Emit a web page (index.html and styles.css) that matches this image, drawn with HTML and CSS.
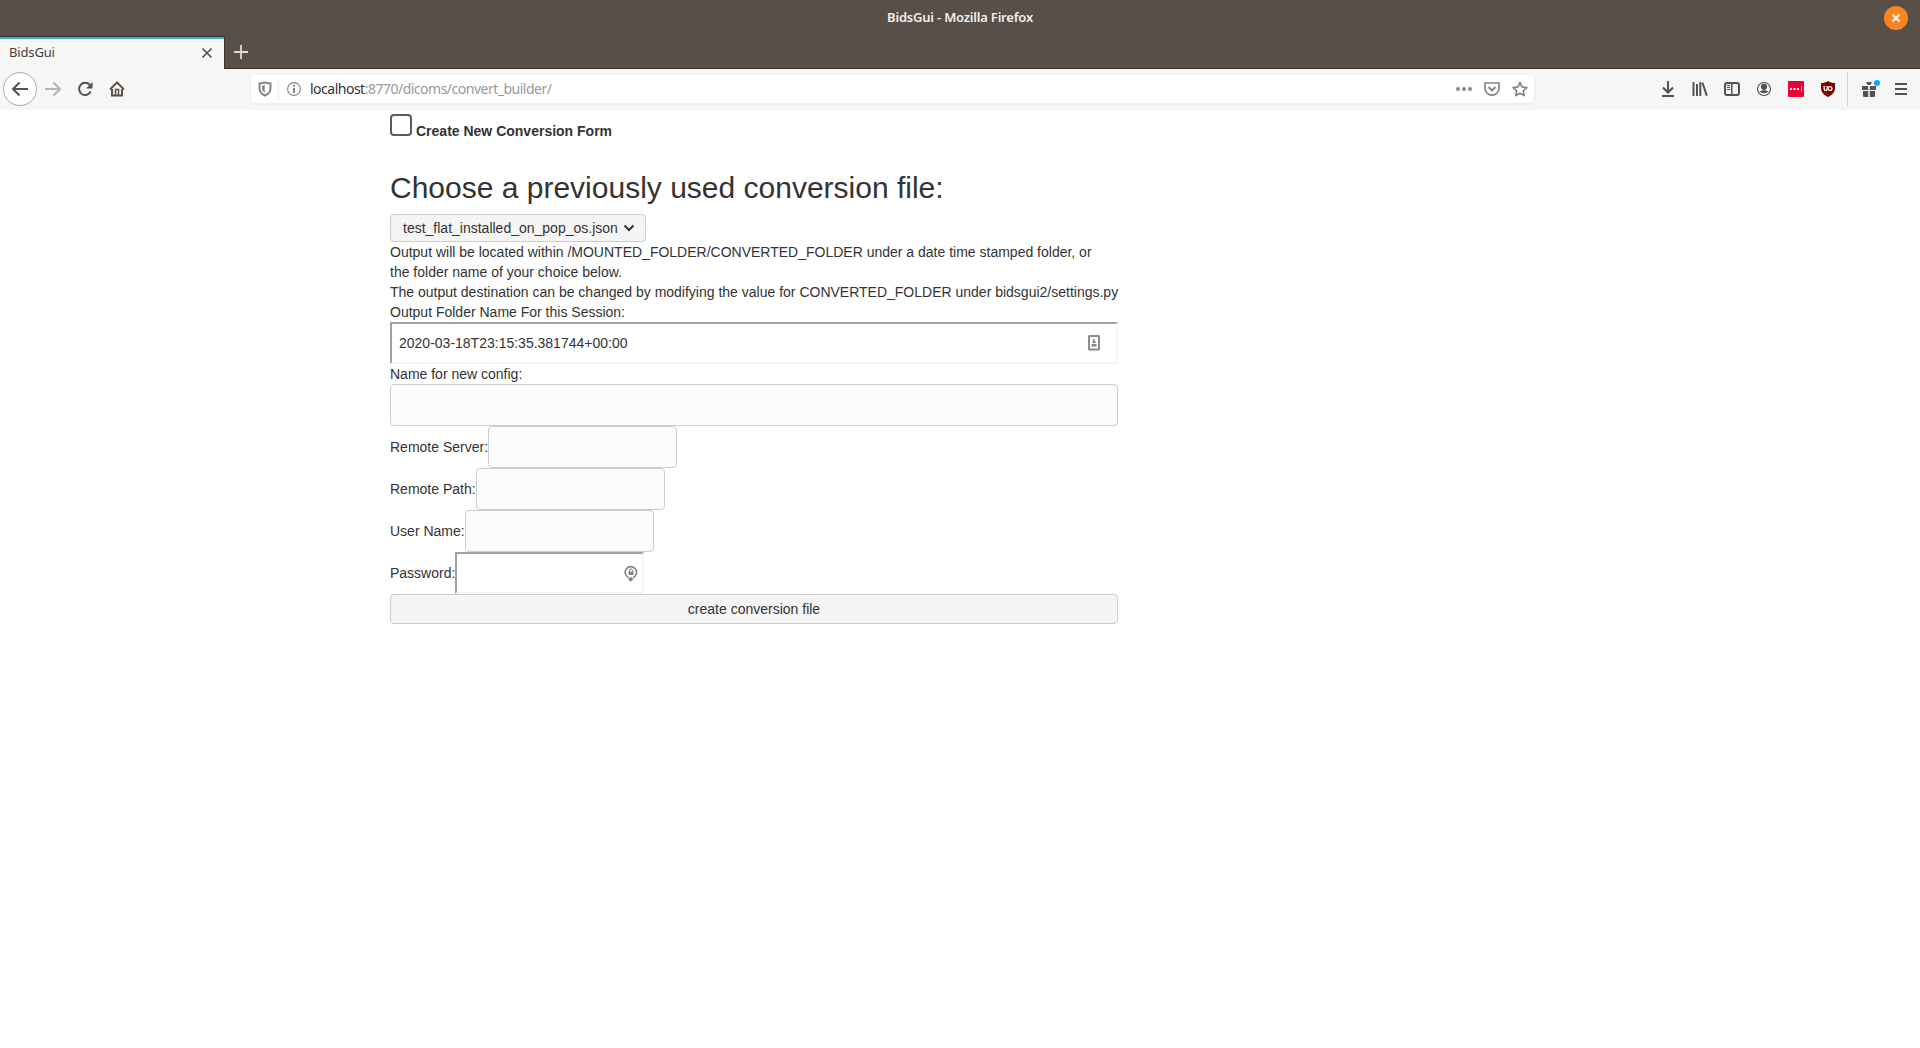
FILE: index.html
```html
<!DOCTYPE html>
<html lang="en">
<head>
<meta charset="utf-8">
<title>BidsGui</title>
<link rel="stylesheet" href="styles.css">
</head>
<body>
<header class="window-bar">
  <span></span>
  <span class="window-title">BidsGui - Mozilla Firefox</span>
  <svg class="window-close" width="24" height="24" viewBox="0 0 24 24"><circle cx="12" cy="12" r="12" fill="#f98420"/><path d="M8.600 8.600l6.800 6.800M15.400 8.600l-6.800 6.800" stroke="#f6eee7" stroke-width="2.200"/></svg>
</header>
<div class="tabs">
  <div class="tab"><span class="tab-title">BidsGui</span>
    <svg width="12" height="12" viewBox="0 0 12 12"><path d="M1.500 1.500l9 9M10.500 1.500l-9 9" stroke="#55504c" stroke-width="1.700"/></svg>
  </div>
  <div class="tab-add"><svg width="14" height="14" viewBox="0 0 14 14"><path d="M7 0v14M0 7h14" stroke="#dedbd9" stroke-width="1.800"/></svg></div>
</div>
<nav class="toolbar">
  <div class="nav-left">
    <span class="back"><svg width="18" height="16" viewBox="0 0 18 16"><path d="M17 8H2M8.500 1.500L2 8l6.500 6.500" class="line"/></svg></span>
    <span class="tool faded"><svg width="16" height="16" viewBox="0 0 16 16"><path d="M0 8h14M8.500 1.500L15 8l-6.500 6.500" class="line"/></svg></span>
    <span class="tool"><svg width="16" height="16" viewBox="0 0 16 16"><path d="M12.800 3.900A6.100 6.100 0 1 0 13.700 10.500" class="line"/><path d="M15.500 1v6.500H9z" fill="#57504b"/></svg></span>
    <span class="tool"><svg width="16" height="16" viewBox="0 0 16 16"><path d="M1 8.400L8 1.500l7 6.900" class="line"/><path d="M3 8v6.500h10V8" class="line"/><path d="M6.500 15V8.500h3V15" fill="none" stroke="#57504b" stroke-width="1.500"/></svg></span>
  </div>
  <div class="address">
    <span class="shield"><svg width="14" height="16" viewBox="0 0 14 16"><path d="M7 1.500C5 2 3 2.500 1.500 2.500V7c0 3.300 2 6 5.500 7.500 3.500-1.500 5.500-4.200 5.500-7.500V2.500C11 2.500 9 2 7 1.500z" fill="none" stroke="#858585" stroke-width="2"/><path d="M6.700 4L4 4.700V7c0 2 1 3.700 2.700 4.700z" fill="#858585"/></svg></span>
    <span class="info"><svg width="14" height="14" viewBox="0 0 14 14"><circle cx="7" cy="7" r="6.400" fill="none" stroke="#858585" stroke-width="1.100"/><circle cx="7" cy="3.900" r="1.100" fill="#858585"/><path d="M7 6v5" stroke="#858585" stroke-width="2"/></svg></span>
    <span class="url"><span class="host">localhost</span><span class="path">:8770/dicoms/convert_builder/</span></span>
    <span class="address-actions">
      <svg width="16" height="16" viewBox="0 0 16 16" fill="#858585"><circle cx="2" cy="8" r="2"/><circle cx="8" cy="8" r="2"/><circle cx="14" cy="8" r="2"/></svg>
      <svg width="16" height="16" viewBox="0 0 16 16" fill="none" stroke="#858585" stroke-width="1.700"><path d="M1 2h14v5.500a7 6.700 0 0 1-14 0z"/><path d="M4.500 6L8 9.400 11.500 6" stroke-width="2"/></svg>
      <svg width="16" height="16" viewBox="0 0 16 16"><path d="M8 1.500l2 4.400 4.900.6-3.600 3.300.9 4.800L8 12.200l-4.200 2.400.9-4.800L1.100 6.500 6 5.900z" fill="none" stroke="#858585" stroke-width="1.700" stroke-linejoin="round"/></svg>
    </span>
  </div>
  <div class="nav-right">
    <span class="tool"><svg width="14" height="16" viewBox="0 0 14 16"><path d="M7 0v11M2 6.500l5 5 5-5M1 15h12" class="line"/></svg></span>
    <span class="tool"><svg width="16" height="16" viewBox="0 0 16 16"><path d="M1.500 1v14M5 3v12M8.300 1v14M10.500 1.700l4.300 13" class="line"/></svg></span>
    <span class="tool"><svg width="16" height="16" viewBox="0 0 16 16"><rect x="1" y="2" width="14" height="12" rx="2" class="line"/><path d="M7.800 2v12" stroke="#57504b" stroke-width="1.500"/><path d="M3 4.500h3M3 6.500h3M3 8.500h3" stroke="#57504b"/></svg></span>
    <span class="tool"><svg width="16" height="16" viewBox="0 0 16 16"><circle cx="8" cy="8" r="6.500" fill="none" stroke="#57504b" stroke-width="1.100"/><circle cx="8" cy="5.800" r="3.100" fill="#57504b"/><path d="M3.500 10q2 .3 2.600-.8h3.800q.6 1.100 2.600.8a5 4 0 0 1-9 0z" fill="#57504b"/></svg></span>
    <span class="tool"><svg width="16" height="16" viewBox="0 0 16 16"><rect width="16" height="16" rx="1" fill="#ed0033"/><path d="M2 7h2v2H2zM5.500 7h2v2h-2zM9 7h2v2H9z" fill="#fff"/><path d="M13.500 5v6" stroke="#ff8da2"/></svg></span>
    <span class="tool"><svg width="16" height="16" viewBox="0 0 16 16"><path d="M8 0c2 1.500 4.500 2 7 2v5c0 4-2.500 7-7 9-4.500-2-7-5-7-9V2c2.500 0 5-.5 7-2z" fill="#800000"/><path d="M4.200 5v3a1.500 1.500 0 0 0 3 0V5" fill="none" stroke="#fff" stroke-width="1.300"/><circle cx="10" cy="7.500" r="1.900" fill="none" stroke="#fff" stroke-width="1.300"/></svg></span>
    <span class="divider"></span>
    <span class="tool gift"><svg width="20" height="18" viewBox="0 0 20 18"><path d="M1 7h6.200v4H1zM8.800 7H15v4H8.800zM2 12h5.200v6H3a1 1 0 0 1-1-1zM8.800 12H14v5a1 1 0 0 1-1 1H8.800z" fill="#57504b"/><path d="M5.500 3h5v1.500L9 6H7L5.500 4.500z" fill="#57504b"/><circle cx="16" cy="4" r="3" fill="#00adf2"/></svg></span>
    <span class="tool menu"><svg width="12" height="12" viewBox="0 0 12 12"><path d="M0 1h12M0 6h12M0 11h12" class="line"/></svg></span>
  </div>
</nav>
<main class="page">
  <form class="conversion">
    <label class="new-form"><span class="checkbox"></span><b>Create New Conversion Form</b></label>
    <h2 class="heading">Choose a previously used conversion file:</h2>
    <div class="picker">test_flat_installed_on_pop_os.json<svg width="12" height="8" viewBox="0 0 12 8"><path d="M1.500 1.500L6 6l4.500-4.500" fill="none" stroke="#333" stroke-width="2"/></svg></div>
    <div class="line-text">Output will be located within /MOUNTED_FOLDER/CONVERTED_FOLDER under a date time stamped folder, or<br>the folder name of your choice below.</div>
    <div class="line-text">The output destination can be changed by modifying the value for CONVERTED_FOLDER under bidsgui2/settings.py</div>
    <div class="line-text">Output Folder Name For this Session:</div>
    <div class="field inset wide"><span>2020-03-18T23:15:35.381744+00:00</span>
      <svg class="name-icon" width="12" height="16" viewBox="0 0 12 16"><rect x="1" y="1" width="10" height="13.500" rx=".5" fill="#fff" stroke="#8b8b8b" stroke-width="2"/><path d="M6 3l2 5H4zM3.500 9h5v2.500h-5z" fill="#8b8b8b"/></svg>
    </div>
    <div class="line-text">Name for new config:</div>
    <div class="field wide"></div>
    <div class="row"><span>Remote Server:</span><div class="field short"></div></div>
    <div class="row"><span>Remote Path:</span><div class="field short"></div></div>
    <div class="row"><span>User Name:</span><div class="field short"></div></div>
    <div class="row"><span>Password:</span><div class="field inset short">
      <svg class="key-icon" width="14" height="17" viewBox="0 0 14 17"><path d="M4.500 12.500A5.700 5.700 0 1 1 9 12.600" fill="none" stroke="#858585" stroke-width="1.700"/><path d="M4.500 6.500h5v3.500h-5zM4 14l2.500-2.300L9.500 14l-3 2.700z" fill="#858585"/><path d="M5.500 7V5.500a1.500 1.500 0 0 1 3 0V7" fill="none" stroke="#858585"/></svg>
    </div></div>
    <button type="button" class="submit">create conversion file</button>
  </form>
</main>
</body>
</html>
```
FILE: styles.css
```css
* { box-sizing: border-box; }
body { margin: 0; background: #fff; color: #333; font: 14px/20px "Liberation Sans", Arial, sans-serif; }
svg { display: block; flex: none; }
.line { fill: none; stroke: #57504b; stroke-width: 2; }

/* Window frame and tabs */
.window-bar { height: 36px; background: #584f49; display: grid; grid-template-columns: 1fr auto 1fr; align-items: center; padding: 0 12px; font-family: "Noto Sans", sans-serif; }
.window-title { color: #f1eeeb; font-size: 13px; font-weight: 600; letter-spacing: -.2px; padding-bottom: 2px; }
.window-close { justify-self: end; }
.tabs { height: 33px; background: #584f49; display: flex; box-shadow: inset 0 -1px #3b3531; }
.tab { width: 225px; background: #f7f7f7; border-top: 1px solid #3b3531; border-right: 1px solid #3b3531; box-shadow: inset 0 2px #45b0c8; display: flex; align-items: center; justify-content: space-between; padding: 0 11px 0 9px; }
.tab-title { font: 13px/20px "Noto Sans", sans-serif; letter-spacing: -.15px; color: #44403d; padding-bottom: 2px; }
.tab-add { padding: 9px; }

/* Navigation toolbar */
.toolbar { height: 41px; background: #f6f6f6; display: flex; align-items: center; justify-content: space-between; padding: 0 3px 1px; }
.nav-left, .nav-right { display: flex; align-items: center; }
.nav-left { width: 248px; }
.back { width: 34px; height: 34px; border: 1px solid #aaa; border-radius: 50%; background: #fff; display: grid; place-items: center; }
.tool { width: 32px; height: 32px; display: grid; place-items: center; }
.faded { opacity: .4; }
.address { width: 1283px; height: 28px; border-radius: 4px; background: #fff; box-shadow: 0 1px 4px rgba(0,0,0,.06); display: flex; align-items: center; }
.shield { width: 28px; height: 22px; border-right: 1px solid #eee; display: grid; place-items: center; }
.info { width: 31px; padding-right: 2px; display: grid; place-items: center; }
.url { flex: 1; font: 14px/20px "Noto Sans", sans-serif; letter-spacing: -.5px; color: #999; padding-bottom: 1px; }
.host { color: #333; }
.address-actions { display: flex; gap: 12px; padding-right: 6px; }
.nav-right { margin-left: auto; }
.divider { width: 1px; height: 34px; background: #d5d5d5; margin: 0 5px 0 3px; }
.gift { padding-left: 4px; padding-bottom: 2px; }

/* Conversion form */
.conversion { width: 728px; margin-left: 390px; padding-top: 4px; }
.new-form { display: flex; height: 22px; }
.new-form b { margin: 7px 0 0 4px; }
.checkbox { width: 22px; height: 22px; border: 2px solid #5b5b5b; border-radius: 4px; }
.heading { margin: 35px 0 10px; font-size: 30px; line-height: 33px; font-weight: 400; }
.picker { width: 256px; height: 28px; border: 1px solid #ccc; border-radius: 4px; background: #f5f5f5; display: flex; align-items: center; justify-content: space-between; padding: 0 10px 0 12px; }
.line-text { white-space: nowrap; }
.field { height: 42px; border: 1px solid #ccc; border-radius: 4px; background: #fcfcfc; }
.inset { border: 2px solid; border-color: #a0a0a0 #f5f5f5 #f5f5f5 #a0a0a0; border-radius: 0; background: #fff; display: flex; align-items: center; justify-content: space-between; padding: 0 16px 0 7px; }
.short { width: 189px; }
.row { display: flex; align-items: center; height: 42px; }
.row .inset { justify-content: flex-end; padding-right: 4px; }
.submit { display: block; width: 100%; height: 30px; padding: 0; border: 1px solid #ccc; border-radius: 4px; background: #f5f5f5; color: #333; font: inherit; }
```
